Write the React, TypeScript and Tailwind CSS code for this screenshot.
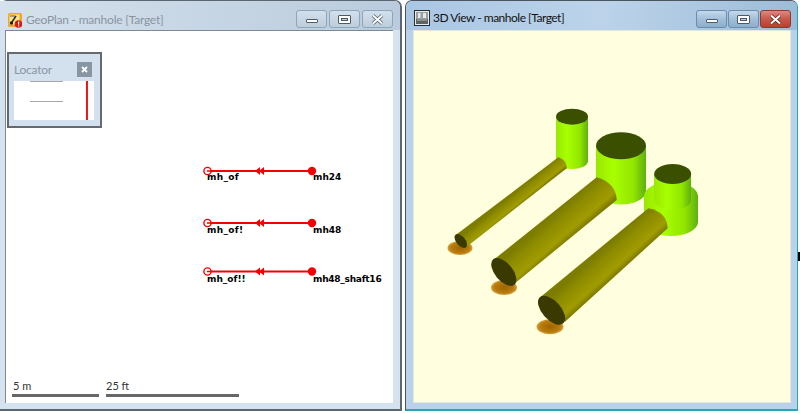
import React from 'react';

const titleFont = "font-['Lato',sans-serif]";
const labelFont = "font-['DejaVu_Sans',sans-serif]";

const CaptionButton: React.FC<{ kind: 'min' | 'max' | 'close'; active?: boolean }> = ({ kind, active }) => {
  const isRed = kind === 'close' && active;
  return (
    <div
      className={`flex h-[18px] w-[31px] items-center justify-center rounded-[3px] border ${
        isRed
          ? 'border-[#8e3a32] bg-gradient-to-b from-[#dc8a7c] via-[#c9584a] to-[#b8402f]'
          : active
            ? 'border-[#6b8cab] bg-gradient-to-b from-[#c5d9ec] via-[#a3bfd9] to-[#8eaecb]'
            : 'border-[#8fa5ba] bg-gradient-to-b from-[#d3e0ec] to-[#bccddd]'
      }`}
    >
      {kind === 'min' && <div className="mt-[3px] h-[4px] w-[12px] rounded-[1px] border border-[#4d5a68] bg-white" />}
      {kind === 'max' && (
        <div className="flex h-[9px] w-[13px] items-center justify-center rounded-[1px] border border-[#4d5a68] bg-white">
          <div className="h-[3px] w-[7px] border border-[#4d5a68] bg-[#b9cbdc]" />
        </div>
      )}
      {kind === 'close' && (
        <svg width="15" height="11" viewBox="0 0 15 11">
          <path d="M3 1.5 L12 9.5 M12 1.5 L3 9.5" stroke={isRed ? '#5e1f18' : '#4d5a68'} strokeWidth="3.6" />
          <path d="M3 1.5 L12 9.5 M12 1.5 L3 9.5" stroke="#fff" strokeWidth="2" />
        </svg>
      )}
    </div>
  );
};

const GeoPlanIcon = () => (
  <svg width="14" height="15" viewBox="0 0 14 15" className="shrink-0">
    <rect x="0" y="0" width="14" height="14" rx="1.5" fill="#f2a626" />
    <rect x="1.5" y="1.5" width="10" height="10" fill="#fbe68c" />
    <path d="M2 3 H7" stroke="#9aa0a0" strokeWidth="2" />
    <path d="M8 3 L4 9" stroke="#33321c" strokeWidth="1.6" />
    <circle cx="3.5" cy="10" r="1.7" fill="#1c1c1c" />
    <circle cx="10.5" cy="11" r="3.8" fill="#d81818" />
    <rect x="10" y="8.6" width="1.2" height="3" fill="#fff" />
    <rect x="10" y="12.3" width="1.2" height="1.1" fill="#fff" />
  </svg>
);

const View3DIcon = () => (
  <svg width="16" height="16" viewBox="0 0 16 16" className="shrink-0">
    <rect x="0.5" y="0.5" width="15" height="15" fill="#e8ecef" stroke="#2c2c2c" />
    <rect x="2" y="2" width="12" height="7" fill="#9a9f9f" />
    <path d="M4 3 H6.5 V8 H4 Z M9 3 H12 V8 H9 Z" fill="#e6e8e8" />
    <rect x="2" y="9" width="12" height="5" fill="#5f6262" />
    <rect x="3" y="9" width="10" height="2" fill="#8d9090" />
  </svg>
);

const Locator = () => (
  <div className="absolute left-[1px] top-[21px] flex h-[76px] w-[95px] flex-col border-2 border-[#666a70] bg-[#d3e0ee] px-[5px]">
    <div className="flex h-[27px] items-start justify-between pr-[3px] pt-[8px]">
      <span className={`${titleFont} text-[12px] leading-[16px] tracking-[-0.25px] text-[#8b96a3]`}>Locator</span>
      <div className="flex h-[15px] w-[15px] items-center justify-center bg-[#8a95a3]">
        <svg width="7" height="7" viewBox="0 0 7 7">
          <path d="M1 1 L6 6 M6 1 L1 6" stroke="#fff" strokeWidth="1.8" />
        </svg>
      </div>
    </div>
    <svg width="80" height="39" viewBox="0 0 80 39" className="bg-white">
      <path d="M16 0.5 H49 M16 20.5 H49" stroke="#a8a8a8" />
      <path d="M73 0 V39" stroke="#f01818" strokeWidth="2" />
    </svg>
  </div>
);

const Network = () => (
  <svg viewBox="6 31 387 371" className="absolute inset-0 h-[371px] w-[387px]">
    {[171, 223, 271.5].map((y) => (
      <g key={y}>
        <path d={`M207 ${y} H312`} stroke="#f50000" strokeWidth="2.2" />
        <circle cx="207.5" cy={y} r="3.6" fill="#fff" stroke="#f50000" strokeWidth="1.4" />
        <path d={`M207 ${y} H212`} stroke="#f50000" strokeWidth="1.5" />
        <circle cx="312" cy={y} r="4.2" fill="#f50000" />
        <path d={`M255 ${y} L260 ${y - 4} V${y + 4} Z M259 ${y} L264 ${y - 4} V${y + 4} Z`} fill="#f50000" />
      </g>
    ))}
  </svg>
);

const MapLabel: React.FC<{ className: string; children: React.ReactNode }> = ({ className, children }) => (
  <span className={`${labelFont} absolute whitespace-nowrap text-[9px] font-bold leading-[11px] text-black ${className}`}>
    {children}
  </span>
);

const Scene = () => (
  <svg viewBox="414 31 376 371" className="h-[371px] w-[376px]">
    <defs>
      <linearGradient id="cyl" x1="0" y1="0" x2="1" y2="0">
        <stop offset="0" stopColor="#9ae800" />
        <stop offset="0.35" stopColor="#a8ff00" />
        <stop offset="0.75" stopColor="#92e600" />
        <stop offset="1" stopColor="#5fae12" />
      </linearGradient>
      <radialGradient id="puddle">
        <stop offset="0" stopColor="#a06400" />
        <stop offset="0.75" stopColor="#b87c10" />
        <stop offset="1" stopColor="#d8a440" />
      </radialGradient>
      <linearGradient id="pipeA" gradientUnits="userSpaceOnUse" x1="558" y1="157" x2="567" y2="168">
        <stop offset="0" stopColor="#7c7c00" />
        <stop offset="0.3" stopColor="#8e8c00" />
        <stop offset="0.75" stopColor="#a09c00" />
        <stop offset="1" stopColor="#747000" />
      </linearGradient>
      <linearGradient id="pipeB" gradientUnits="userSpaceOnUse" x1="597" y1="177" x2="617" y2="200">
        <stop offset="0" stopColor="#7c7c00" />
        <stop offset="0.3" stopColor="#8e8c00" />
        <stop offset="0.75" stopColor="#a09c00" />
        <stop offset="1" stopColor="#747000" />
      </linearGradient>
      <linearGradient id="pipeC" gradientUnits="userSpaceOnUse" x1="648" y1="208" x2="668" y2="230">
        <stop offset="0" stopColor="#7c7c00" />
        <stop offset="0.3" stopColor="#8e8c00" />
        <stop offset="0.75" stopColor="#a09c00" />
        <stop offset="1" stopColor="#747000" />
      </linearGradient>
    </defs>

    <ellipse cx="460" cy="248" rx="12.5" ry="7" fill="url(#puddle)" />
    <ellipse cx="504" cy="287.5" rx="13" ry="7.5" fill="url(#puddle)" />
    <ellipse cx="550" cy="326.7" rx="13.5" ry="7.5" fill="url(#puddle)" />

    <path d="M556 117 V161 A16 8 0 0 0 588 161 V117 Z" fill="url(#cyl)" />
    <ellipse cx="572" cy="116.7" rx="16" ry="8" fill="#3a5000" />
    <path d="M558.3 157.3 L455.7 235 L466 247.3 L566.7 168.3 Q567 160 558.3 157.3 Z" fill="url(#pipeA)" />
    <ellipse cx="460.8" cy="241" rx="8.2" ry="4.5" transform="rotate(50 460.8 241)" fill="#3a3a00" />

    <path d="M596 146 V191 A25 13.5 0 0 0 646 191 V146 Z" fill="url(#cyl)" />
    <ellipse cx="621" cy="145.7" rx="25" ry="13.5" fill="#3a5000" />
    <path d="M596.7 177.3 L493.3 260 L515 283.3 L616.7 200 Q616 183 596.7 177.3 Z" fill="url(#pipeB)" />
    <ellipse cx="503.8" cy="272" rx="16.5" ry="8.8" transform="rotate(50 503.8 272)" fill="#3a3a00" />

    <path d="M644 196 V222 A27 14 0 0 0 698 222 V196 A27 14 0 0 0 644 196 Z" fill="url(#cyl)" />
    <path d="M654 174 V200 A18.5 10 0 0 0 691 200 V174 Z" fill="url(#cyl)" />
    <ellipse cx="672.7" cy="174" rx="18.5" ry="10" fill="#3a5000" />
    <path d="M648.3 208.3 L539 298.3 L565 321.7 L667.7 228.3 Q667 212 648.3 208.3 Z" fill="url(#pipeC)" />
    <ellipse cx="551.6" cy="310.3" rx="17.5" ry="9.3" transform="rotate(48 551.6 310.3)" fill="#3a3a00" />
  </svg>
);

const App: React.FC = () => {
  return (
    <div className="flex h-[413px] w-[800px] items-start overflow-hidden bg-white">
      {/* GeoPlan window, inactive */}
      <div className="flex h-[411px] w-[402px] flex-col rounded-t-[7px] border-r-2 border-b-2 border-t border-[#5c6670] bg-[#d5e3f1] pl-[5px] pr-[7px] pb-[6px]">
        <div className="-ml-[5px] -mr-[7px] flex h-[29px] shrink-0 items-start justify-between rounded-tr-[6px] bg-gradient-to-r from-[#d5e1ed] to-[#b9cbdc] pl-[8px] pr-[7px] pt-[9px]">
          <div className="mt-[2px] flex items-center gap-[4px]">
            <GeoPlanIcon />
            <span className={`${titleFont} text-[12px] leading-[16px] tracking-[-0.22px] text-[#8a949f]`}>GeoPlan - manhole [Target]</span>
          </div>
          <div className="flex gap-[2px]">
            <CaptionButton kind="min" />
            <CaptionButton kind="max" />
            <CaptionButton kind="close" />
          </div>
        </div>
        <div className="relative flex flex-1 flex-col justify-end border-l border-t border-[#7d8a96] bg-white pb-[6px] pl-[6px]">
          <Network />
          <Locator />
          <MapLabel className="left-[201px] top-[141px] tracking-[0.3px]">mh_of</MapLabel>
          <MapLabel className="left-[307px] top-[141px]">mh24</MapLabel>
          <MapLabel className="left-[201px] top-[194px] tracking-[0.3px]">mh_of!</MapLabel>
          <MapLabel className="left-[307px] top-[194px]">mh48</MapLabel>
          <MapLabel className="left-[201px] top-[243px]">mh_of!!</MapLabel>
          <MapLabel className="left-[307px] top-[243px] tracking-[-0.25px]">mh48_shaft16</MapLabel>
          <div className="flex gap-[7px]">
            <div className="w-[87px]">
              <div className={`${titleFont} pl-[1px] text-[11px] leading-[14px] text-[#333]`}>5 m</div>
              <div className="mt-[1px] h-[3px] bg-[#666]" />
            </div>
            <div className="w-[133px]">
              <div className={`${titleFont} text-[11px] leading-[14px] text-[#333]`}>25 ft</div>
              <div className="mt-[1px] h-[3px] bg-[#666]" />
            </div>
          </div>
        </div>
      </div>

      {/* 3D View window, active */}
      <div className="ml-[3px] flex h-[411px] w-[393px] flex-col rounded-t-[7px] border-x border-t border-b-2 border-[#4b5560] border-b-[#2aa5b8] border-r-[#2aa5b8] bg-[#b9d1ea] pl-[7px] pr-[6px] pb-[6px]">
        <div className="-ml-[7px] -mr-[6px] flex h-[29px] shrink-0 items-start justify-between rounded-t-[6px] bg-gradient-to-r from-[#a9c6e3] via-[#bcd3ea] to-[#9dbcd8] pl-[8px] pr-[6px] pt-[9px]">
          <div className="flex items-center gap-[3px]">
            <View3DIcon />
            <span className={`${titleFont} text-[12px] leading-[16px] tracking-[-0.5px] text-[#111]`}>3D View - manhole [Target]</span>
          </div>
          <div className="flex gap-[1px]">
            <CaptionButton kind="min" active />
            <CaptionButton kind="max" active />
            <CaptionButton kind="close" active />
          </div>
        </div>
        <div className="flex-1 overflow-hidden border border-[#e6e6da] bg-[#ffffe0]">
          <Scene />
        </div>
      </div>
      <div className="mt-[252px] h-[9px] w-[2px] bg-black" />
    </div>
  );
};

export default App;
